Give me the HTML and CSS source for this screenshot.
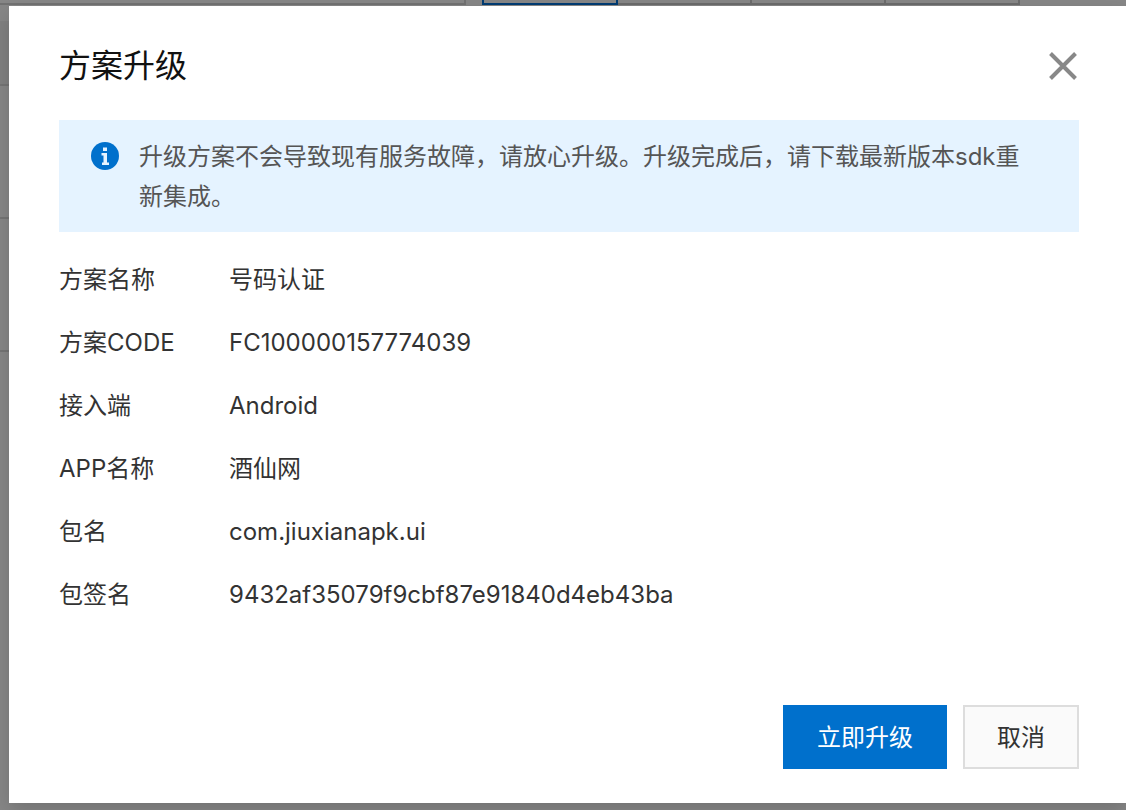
FILE: index.html
```html
<!DOCTYPE html>
<html lang="zh-CN">
<head>
<meta charset="utf-8">
<title>方案升级</title>
<link rel="stylesheet" href="styles.css">
</head>
<body>
<div class="backdrop" aria-hidden="true">
  <div class="toolbar">
    <div class="search-box"></div>
    <div class="tabs">
      <span class="tab tab-active"></span>
      <span class="tab"></span>
      <span class="tab"></span>
      <span class="tab"></span>
    </div>
  </div>
  <div class="grid-head"></div>
  <div class="grid-row"></div>
  <div class="grid-row"></div>
</div>
<main class="dialog" role="dialog" aria-labelledby="dialog-title">
  <header class="dialog-header">
    <h1 class="dialog-title" id="dialog-title">方案升级</h1>
    <button class="close" type="button" aria-label="关闭">
      <svg class="close-icon" viewBox="0 0 32 32"><path d="M3.500 3.500 28.500 28.500M28.500 3.500 3.500 28.500" fill="none" stroke="#888" stroke-width="4"/></svg>
    </button>
  </header>
  <div class="notice">
    <svg class="notice-icon" viewBox="0 0 28 28" aria-hidden="true"><circle cx="14" cy="14" r="14" fill="#0070cc"/><path d="M12 5.500h4v3.500h-4zM10.500 11H16v9.500h2V23h-7v-2.500h1.500v-7h-2z" fill="#e5f3ff"/></svg>
    <p class="notice-text">升级方案不会导致现有服务故障，请放心升级。升级完成后，请下载最新版本sdk重新集成。</p>
  </div>
  <dl class="details">
    <dt>方案名称</dt><dd>号码认证</dd>
    <dt>方案CODE</dt><dd>FC100000157774039</dd>
    <dt>接入端</dt><dd>Android</dd>
    <dt>APP名称</dt><dd>酒仙网</dd>
    <dt>包名</dt><dd>com.jiuxianapk.ui</dd>
    <dt>包签名</dt><dd>9432af35079f9cbf87e91840d4eb43ba</dd>
  </dl>
  <footer class="dialog-footer">
    <button class="button button-primary" type="button">立即升级</button>
    <button class="button" type="button">取消</button>
  </footer>
</main>
</body>
</html>
```
FILE: styles.css
```css
* {
  box-sizing: border-box;
}

body {
  display: flex;
  min-height: 100vh;
  margin: 0;
  padding: 6px 0 7px 9px;
  background: #878787;
  color: #333;
  font: 24px/40px Inter, "Noto Sans CJK SC", sans-serif;
}

.backdrop {
  position: absolute;
  inset: 0;
  z-index: -1;
  overflow: hidden;
}

.toolbar {
  display: flex;
  gap: 16px;
  height: 5px;
  margin-bottom: 16px;
}

.search-box {
  width: 466px;
  border: solid #727272;
  border-width: 0 2px 2px 0;
}

.tabs {
  display: flex;
}

.tab {
  width: 134px;
  border: solid #6b6b6b;
  border-width: 0 2px 2px 0;
}

.tab-active {
  width: 136px;
  border-color: #003c73;
  border-left-width: 2px;
}

.grid-head {
  height: 65px;
  border-bottom: 2px solid #757575;
  background: #818181;
}

.grid-row {
  height: 133px;
  border-bottom: 2px solid #757575;
}

.dialog {
  display: flex;
  flex: 1;
  flex-direction: column;
  padding: 36px 47px 34px 50px;
  background: #fff;
  box-shadow: 0 8px 20px rgba(0, 0, 0, 0.16);
}

.dialog-header {
  display: flex;
  align-items: center;
  justify-content: space-between;
  height: 48px;
  margin-bottom: 30px;
}

.dialog-title {
  margin: 0;
  color: #111;
  font-size: 32px;
  font-weight: 400;
  line-height: 48px;
}

.close {
  display: flex;
  padding: 0;
  border: 0;
  background: none;
}

.close-icon {
  width: 32px;
  height: 32px;
}

.notice {
  display: flex;
  gap: 20px;
  padding: 17px 48px 15px 32px;
  background: #e5f3ff;
  color: #555;
}

.notice-icon {
  flex: none;
  width: 28px;
  height: 28px;
  margin-top: 5px;
}

.notice-text {
  margin: 0;
}

.details {
  display: grid;
  grid-template-columns: 170px 1fr;
  row-gap: 23px;
  margin: 28px 0 0;
}

.details dt,
.details dd {
  margin: 0;
}

.dialog-footer {
  display: flex;
  justify-content: flex-end;
  gap: 16px;
  margin-top: auto;
}

.button {
  height: 64px;
  padding: 2px 32px 0;
  border: 2px solid #ddd;
  background: #fafafa;
  color: #333;
  font: inherit;
}

.button-primary {
  border-color: #0070cc;
  background: #0070cc;
  color: #fff;
}
```
